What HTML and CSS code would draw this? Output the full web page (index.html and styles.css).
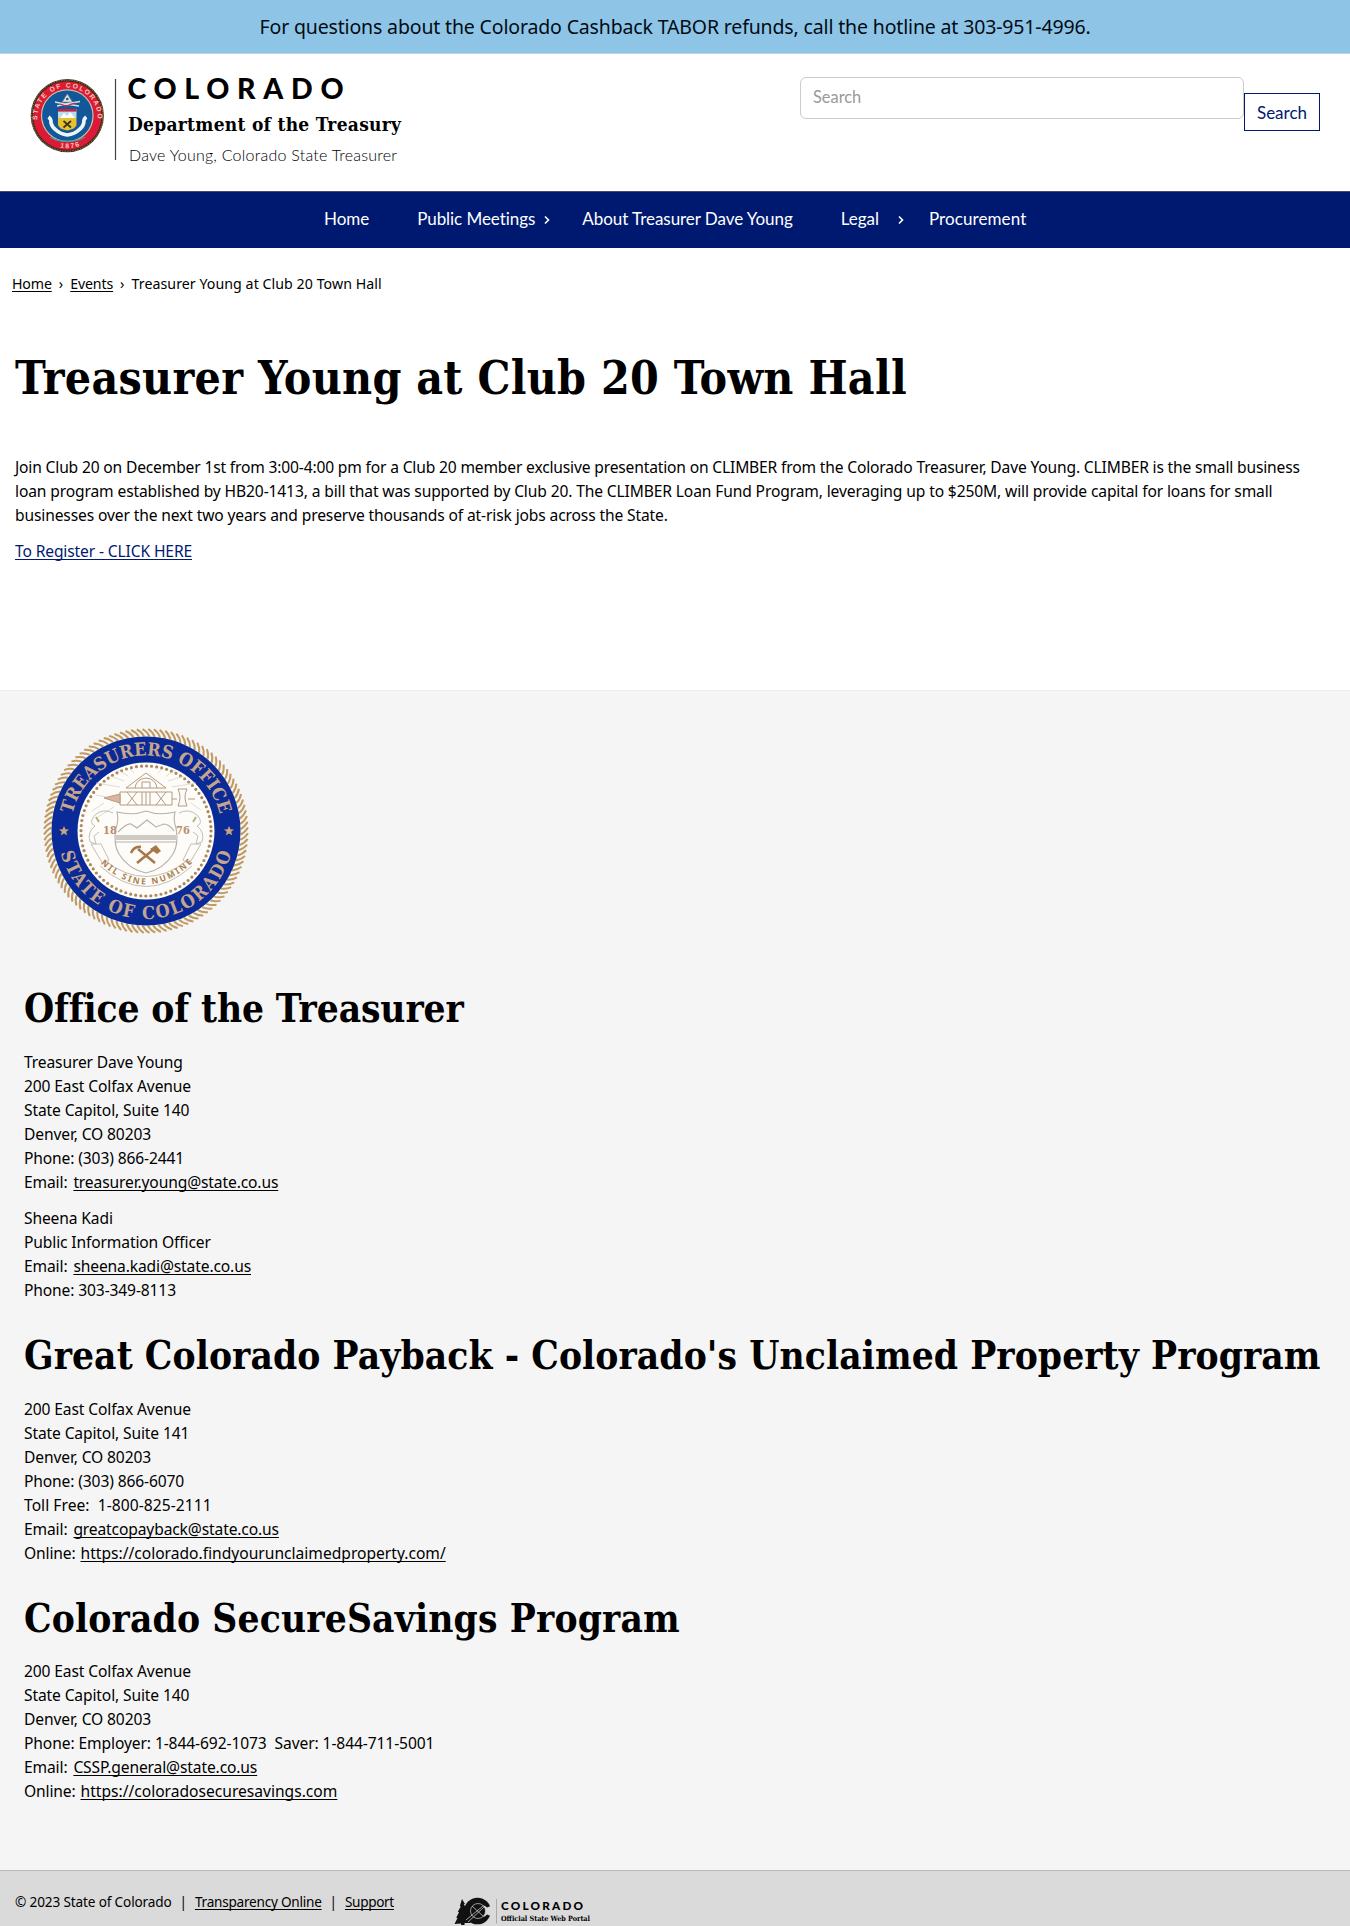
FILE: index.html
```
<!DOCTYPE html>
<html lang="en">
<head>
<meta charset="utf-8">
<title>Treasurer Young at Club 20 Town Hall</title>
<link rel="stylesheet" href="styles.css">
</head>
<body>
<div class="banner">For questions about the Colorado Cashback TABOR refunds, call the hotline at 303-951-4996.</div>

<header class="header">
  <svg class="logo" width="390" height="90" viewBox="24 74 390 90" role="img" aria-label="Colorado Department of the Treasury">
    <defs>
      <path id="sealTop" d="M37.6 122a30.2 30.2 0 1 1 59.8 0"/>
      <path id="sealBottom" d="M42 137a34.5 34.5 0 0 0 51 0"/>
    </defs>
    <circle cx="67.3" cy="115.6" r="36.6" fill="#3d2b1e"/>
    <circle cx="67.3" cy="115.6" r="35.6" fill="none" stroke="#a98a4a" stroke-width=".9" stroke-dasharray="1.4 1.2"/>
    <circle cx="67.3" cy="115.6" r="34.2" fill="#dc1a37"/>
    <circle cx="67.3" cy="115.6" r="26.4" fill="#c9c3a0"/>
    <circle cx="67.3" cy="115.6" r="25.2" fill="#13579b"/>
    <text class="seal-text"><textPath href="#sealTop" textLength="98" startOffset="2">STATE OF COLORADO</textPath></text>
    <text class="seal-text"><textPath href="#sealBottom" textLength="20" startOffset="21">1876</textPath></text>
    <path d="M67.3 94l5 8h-10z" fill="#dfe6ea" stroke="#8b8b7a" stroke-width=".7"/>
    <circle cx="67.3" cy="99" r="1.3" fill="#1c4f86"/>
    <path d="M55 102l10 2 15-2.5M57 106l9-2 13 2" stroke="#d8dde2" stroke-width="1.6" fill="none"/>
    <path d="M60 104l6 2 9-3" stroke="#c03344" stroke-width="1.2" fill="none"/>
    <path d="M58 109h18.5v9H58z" fill="#b9dcea"/>
    <path d="M58 109h18.5v2.6H58z" fill="#c62340"/>
    <path d="M60 118l4-5 3 3 3-4 5 6z" fill="#fff"/>
    <path d="M58 118h18.5v7q-1 4-9.2 5.5Q59 129 58 125z" fill="#e6c22f"/>
    <path d="M63.5 121l7.5 6.5m0-6.5l-7.5 6.5" stroke="#3a3320" stroke-width="1.7"/>
    <path d="M48.5 117q3 2 2.5 6 1 4 5 7 4 4 11.3 5 7.5-1 11.5-5 4-3 5-7-.5-4 2.5-6" stroke="#eef3f6" stroke-width="3.6" fill="none"/>
    <path d="M50 137q7 4.5 17.5 4.5T85 137" stroke="#3e9f9b" stroke-width="1.3" fill="none"/>
    <path d="M115.5 79v81" stroke="#444" stroke-width="1.2"/>
    <text class="logo-name" x="127.5" y="99" textLength="216">COLORADO</text>
    <text class="logo-dept" x="128" y="130.5" textLength="273">Department of the Treasury</text>
    <text class="logo-person" x="129" y="160.5" textLength="268">Dave Young, Colorado State Treasurer</text>
  </svg>
  <form class="search">
    <input class="search-input" type="text" placeholder="Search">
    <button class="search-button" type="button">Search</button>
  </form>
</header>

<nav class="nav">
  <a>Home</a>
  <a>Public Meetings<svg class="chev" width="6" height="10" viewBox="0 0 6 10"><path d="M1 1.500l3.500 3.500L1 8.500"/></svg></a>
  <a class="after-menu">About Treasurer Dave Young</a>
  <a>Legal<svg class="chev wide" width="6" height="10" viewBox="0 0 6 10"><path d="M1 1.500l3.500 3.500L1 8.500"/></svg></a>
  <a class="after-legal">Procurement</a>
</nav>

<main class="main">
  <div class="breadcrumb"><a class="link">Home</a><span>›</span><a class="link">Events</a><span>›</span>Treasurer Young at Club 20 Town Hall</div>
  <h1 class="title">Treasurer Young at Club 20 Town Hall</h1>
  <p><span class="tight">Join Club 20 on December 1st from 3:00-4:00 pm for a Club 20 member exclusive presentation on CLIMBER from the Colorado Treasurer, Dave Young. CLIMBER is the small business</span><br>loan program established by HB20-1413, a bill that was supported by Club 20. The CLIMBER Loan Fund Program, leveraging up to $250M, will provide capital for loans for small<br>businesses over the next two years and preserve thousands of at-risk jobs across the State.</p>
  <p><a class="link register">To Register - CLICK HERE</a></p>
</main>

<section class="offices">
  <svg class="seal" width="212" height="212" viewBox="-106 -106 212 212" role="img" aria-label="Treasurers Office, State of Colorado">
    <defs>
      <path id="ringTop" d="M-75.5 0A75.5 75.5 0 0 1 75.5 0"/>
      <path id="ringBottom" d="M-88 0A88 88 0 0 0 88 0"/>
      <path id="motto" d="M-47 31Q0 76 47 31"/>
      <path id="star" d="M0-5l1.400 3.300 3.600.2-2.800 2.300 1 3.500L0 2.500l-3.200 1.800 1-3.500L-5-1.500l3.600-.2z"/>
    </defs>
    <g id="rope" class="rope"></g>
    <circle r="94.5" fill="#0a2a97"/>
    <circle r="68.5" fill="#fdfcf9"/>
    <circle r="65" fill="none" stroke="#a98a5f" stroke-width="3.2" stroke-linecap="round" stroke-dasharray="0 5.106"/>
    <text class="ring-text"><textPath href="#ringTop" startOffset="17" textLength="203">TREASURERS OFFICE</textPath></text>
    <text class="ring-text"><textPath href="#ringBottom" startOffset="22" textLength="232">STATE OF COLORADO</textPath></text>
    <use href="#star" x="-82" y="0" fill="#c9a27f"/>
    <use href="#star" x="83" y="0" fill="#c9a27f"/>
    <g stroke="#d6cfc6" stroke-width=".7" fill="none">
      <path d="M-12-58l-4-4M12-58l4-4M-22-50l-14-5M-26-44l-24-4M22-50l16-5M26-44l24-4M-40-34l-10-2M-42-28l-12 8M-32-24l-16 10M45-28l10 7M-18-55l-10-6M20-55l10-6"/>
    </g>
    <g stroke="#b49b82" stroke-width="1" fill="none">
      <path d="M-20-43L0-58l20 15zM-11-43q1-9 11-10 10 1 11 10M-4-43v-6h8v6"/>
      <path d="M-26-39h52v13h-52zM-19-39l10 13m0-13l-10 13M-4-39v13m4-13v13m4-13v13M10-39l10 13m0-13l-10 13"/>
      <path d="M-26-37l-16 4 16 5z" fill="#dcb5a0"/>
      <path d="M26-32h5M32-42h9q-4 8 0 17h-9q4-9 0-17zM42-32h7"/>
    </g>
    <g stroke="#b9b0a6" stroke-width="1.1" fill="none">
      <path d="M0-20q-13 5-29 1 2 8-1 16-3 16 3 26 9 15 27 19 18-4 27-19 6-10 3-26-3-8-1-16-16 4-29-1z"/>
      <path d="M-28 1q9-9 13-8l6 4 10-8 9 7 8-3q5 0 10 7M-31 11h62"/>
    </g>
    <path d="M-30 4h60v5h-60z" fill="#cfcac4"/>
    <g stroke="#c4beb8" stroke-width="1" fill="none">
      <path d="M-33-18q-10-5-18 2-7 8 0 11-8 6-5 16l6 2-2-8 5-4M33-18q10-5 18 2 7 8 0 11 8 6 5 16l-6 2 2-8-5-4M-55 13l12 20 6-4-8-16zM55 13L43 33l-6-4 8-16zM-46 35Q0 76 46 35M-42 29Q0 62 42 29"/>
    </g>
    <path d="M-50-14l3 5M50-14l-3 5" stroke="#b7b37a" stroke-width="2"/>
    <path d="M-9 32L8 18M9 32L-8 18" stroke="#a87848" stroke-width="2.6"/>
    <path d="M-15 22q3-7 10-6" stroke="#a87848" stroke-width="2.6" fill="none"/>
    <path d="M4 18l6-4 5 6-4 3z" fill="#a87848"/>
    <text class="year" x="-43" y="3" textLength="14">18</text>
    <text class="year" x="30" y="3" textLength="14">76</text>
    <text class="motto"><textPath href="#motto" startOffset="2" textLength="104">NIL SINE NUMINE</textPath></text>
  </svg>

  <h2>Office of the Treasurer</h2>
  <p>Treasurer Dave Young<br>200 East Colfax Avenue<br>State Capitol, Suite 140<br>Denver, CO 80203<br>Phone: (303) 866-2441<br>Email: <a class="link">treasurer.young@state.co.us</a></p>
  <p>Sheena Kadi<br>Public Information Officer<br>Email: <a class="link">sheena.kadi@state.co.us</a><br>Phone: 303-349-8113</p>

  <h2 class="payback">Great Colorado Payback - Colorado's Unclaimed Property Program</h2>
  <p>200 East Colfax Avenue<br>State Capitol, Suite 141<br>Denver, CO 80203<br>Phone: (303) 866-6070<br><span class="toll-free">Toll Free:&nbsp; 1-800-825-2111</span><br>Email: <a class="link">greatcopayback@state.co.us</a><br>Online: <a class="link url">https://colorado.findyourunclaimedproperty.com/</a></p>

  <h2 class="savings">Colorado SecureSavings Program</h2>
  <p>200 East Colfax Avenue<br>State Capitol, Suite 140<br>Denver, CO 80203<br><span class="phones">Phone: Employer: 1-844-692-1073&nbsp; Saver: 1-844-711-5001</span><br>Email: <a class="link">CSSP.general@state.co.us</a><br>Online: <a class="link url">https://coloradosecuresavings.com</a></p>
</section>

<footer class="footer">
  <div class="legal"><span class="copyright">© 2023 State of Colorado</span><span>|</span><a class="link">Transparency Online</a><span>|</span><a class="link">Support</a></div>
  <svg width="140" height="28" viewBox="454 1896 140 28" role="img" aria-label="Colorado Official State Web Portal">
    <path d="M462 1898l3 5-1.200.3 3 5-1.600.4 3.500 5.500-2 .5 4 7.300h-6l-.4 3h-3l-.3-2.500-6.500.5 3-6-1.300-.3 2.800-5.500-1.200-.4 3-5.300-1-.4z" fill="#111"/>
    <circle cx="477.5" cy="1910" r="13.3" fill="#111"/>
    <path d="M492 1904.5l-5 2q-2-2.500-5-2.500v12q3 0 5-2.500l5 2z" fill="#dadada"/>
    <circle cx="478" cy="1910" r="7.5" fill="#111" stroke="#ccc" stroke-width=".7"/>
    <path d="M466 1919l17-14M468 1921l16-15M472 1905l11 10" stroke="#ddd" stroke-width=".7" fill="none"/>
    <path d="M496.5 1898v24.5" stroke="#aaa" stroke-width="1"/>
    <text class="portal-name" x="501" y="1908.7" textLength="82">COLORADO</text>
    <text class="portal-sub" x="501" y="1920" textLength="89">Official State Web Portal</text>
  </svg>
</footer>
<script src="seal.js"></script>
</body>
</html>
```
FILE: seal.js
```
// Slanted strands of the rope border around the seal
const rope = document.getElementById('rope');
const strands = 112;
for (let i = 0; i < strands; i++) {
  const strand = document.createElementNS('http://www.w3.org/2000/svg', 'path');
  strand.setAttribute('d', 'M3.5-94.5Q1.5-99-3.5-102');
  strand.setAttribute('transform', `rotate(${(i * 360) / strands})`);
  rope.append(strand);
}
```
FILE: styles.css
```
body {
  margin: 0;
  font: 15.6px/24px "Noto Sans", sans-serif;
  letter-spacing: -0.13px;
  color: #000;
  background: #fff;
}

p { margin: 0; }
p + p { margin-top: 12px; }

.link { text-decoration: underline; text-decoration-skip-ink: none; text-underline-offset: 2px; }

.banner {
  height: 53px;
  border-bottom: 1px solid #b9d5e8;
  background: #8ec5e7;
  color: #020b14;
  font-size: 19.5px;
  line-height: 53px;
  letter-spacing: -0.154px;
  text-align: center;
}

.header {
  display: flex;
  justify-content: space-between;
  height: 117px;
  padding: 20px 30px 0 24px;
}

.logo { overflow: visible; }
.logo-name { font: 900 28.5px/1 Lato, sans-serif; letter-spacing: 0; }
.logo-dept { font: 700 19px "DejaVu Serif Condensed", serif; letter-spacing: 0; }
.logo-person { font: 300 16px Lato, sans-serif; letter-spacing: 0; }
.seal-text { font: 700 6.8px "Liberation Sans", sans-serif; letter-spacing: 0; fill: #f3cdb2; }

.search { display: flex; align-items: flex-start; }

.search-input {
  box-sizing: border-box;
  width: 444px;
  height: 42px;
  margin-top: 3px;
  padding: 0 12px 3px;
  border: 1.5px solid #ccc;
  border-radius: 6px;
  font: 16.4px Lato, sans-serif;
}
.search-input::placeholder { color: #999; }

.search-button {
  box-sizing: border-box;
  width: 76px;
  height: 38px;
  margin-top: 19px;
  padding: 0;
  border: 1px solid #001970;
  background: #fff;
  color: #001970;
  font: 17px Lato, sans-serif;
}

.nav {
  display: flex;
  align-items: center;
  gap: 48px;
  box-sizing: border-box;
  height: 57px;
  padding: 0 0 3px 324px;
  border-top: 1px solid #4a4a66;
  background: #001970;
  color: #fff;
  font: 17px Lato, sans-serif;
  letter-spacing: -0.05px;
}
.nav .after-menu { margin-left: -16px; }
.nav .after-legal { margin-left: -23px; letter-spacing: 0.1px; }

.chev { margin-left: 9px; fill: none; stroke: #fff; stroke-width: 1.6; }
.chev.wide { margin-left: 19px; }

.main { box-sizing: border-box; height: 442px; padding: 24px 15px 0; }

.breadcrumb {
  display: flex;
  gap: 7px;
  margin-left: -3px;
  font-size: 14.2px;
  line-height: 24px;
  letter-spacing: 0.05px;
}
.breadcrumb .link { letter-spacing: -0.15px; }

h1, h2 { margin: 0; font-family: "DejaVu Serif Condensed", "DejaVu Serif", serif; font-weight: 700; white-space: nowrap; }

.title { margin: 54px 0 49px; font-size: 46px; line-height: 56px; letter-spacing: 0.28px; }

.tight { letter-spacing: -0.165px; }
.register { color: #001970; }

.offices {
  box-sizing: border-box;
  height: 1180px;
  padding: 34px 24px 0;
  border-top: 1px solid #eee;
  background: #f5f5f5;
}
.offices h2 { margin: 30px 0 17px; font-size: 38.5px; line-height: 48px; letter-spacing: -0.13px; }
.offices .payback { letter-spacing: 0.08px; }
.offices .savings { margin-bottom: 16px; letter-spacing: 0.15px; }
.offices .link { margin-left: 2px; }
.offices .url { margin-left: 1px; letter-spacing: 0; }
.phones { letter-spacing: -0.1px; }
.toll-free { letter-spacing: 0.05px; }

.seal { display: block; margin: 0 0 48px 16px; }
.rope path { fill: none; stroke: #c19a62; stroke-width: 2; }
.ring-text { font: 700 18px "DejaVu Serif Condensed", serif; letter-spacing: 0; fill: #c6a58d; }
.year { font: 700 11px "DejaVu Serif Condensed", serif; letter-spacing: 0; fill: #b98d6c; }
.motto { font: 700 8.5px "Noto Sans", sans-serif; letter-spacing: 0; fill: #ad8250; }

.footer {
  display: flex;
  align-items: flex-start;
  gap: 66px;
  height: 56px;
  padding: 18px 15px 0;
  box-sizing: border-box;
  border-top: 1px solid #bbb;
  background: #dadada;
}
.footer svg { flex: none; margin-top: 8px; }
.legal {
  display: flex;
  flex: none;
  gap: 8px;
  width: 373px;
  font-size: 13.6px;
  line-height: 25px;
  white-space: nowrap;
}
.legal .copyright { letter-spacing: -0.15px; }
.legal .link { letter-spacing: -0.24px; }
.legal .link:last-child { letter-spacing: -0.35px; }
.portal-name { font: 900 11.7px Lato, sans-serif; letter-spacing: 0; }
.portal-sub { font: 700 7.2px "DejaVu Serif Condensed", serif; letter-spacing: 0; }
```
